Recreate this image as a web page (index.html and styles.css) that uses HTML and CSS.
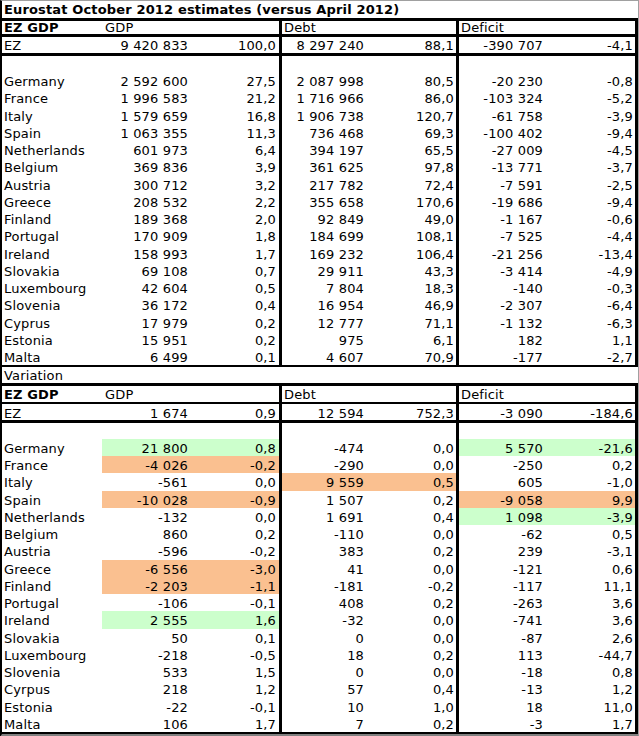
FILE: index.html
```html
<!DOCTYPE html>
<html>
<head>
<meta charset="utf-8">
<link rel="stylesheet" href="styles.css">
</head>
<body>
<div class="sheet">
  <div class="title">Eurostat October 2012 estimates (versus April 2012)</div>
  <div class="section first">
    <div class="hdr"><span class="b">EZ GDP</span><span class="grp">GDP</span><span class="grp">Debt</span><span class="grp last">Deficit</span></div>
    <div class="row ez"><span>EZ</span><span>9 420 833</span><span>100,0</span><span>8 297 240</span><span>88,1</span><span>-390 707</span><span>-4,1</span></div>
    <div class="row blank"><span></span><span></span><span></span><span></span><span></span><span></span><span></span></div>
    <div class="row"><span>Germany</span><span>2 592 600</span><span>27,5</span><span>2 087 998</span><span>80,5</span><span>-20 230</span><span>-0,8</span></div>
    <div class="row"><span>France</span><span>1 996 583</span><span>21,2</span><span>1 716 966</span><span>86,0</span><span>-103 324</span><span>-5,2</span></div>
    <div class="row"><span>Italy</span><span>1 579 659</span><span>16,8</span><span>1 906 738</span><span>120,7</span><span>-61 758</span><span>-3,9</span></div>
    <div class="row"><span>Spain</span><span>1 063 355</span><span>11,3</span><span>736 468</span><span>69,3</span><span>-100 402</span><span>-9,4</span></div>
    <div class="row"><span>Netherlands</span><span>601 973</span><span>6,4</span><span>394 197</span><span>65,5</span><span>-27 009</span><span>-4,5</span></div>
    <div class="row"><span>Belgium</span><span>369 836</span><span>3,9</span><span>361 625</span><span>97,8</span><span>-13 771</span><span>-3,7</span></div>
    <div class="row"><span>Austria</span><span>300 712</span><span>3,2</span><span>217 782</span><span>72,4</span><span>-7 591</span><span>-2,5</span></div>
    <div class="row"><span>Greece</span><span>208 532</span><span>2,2</span><span>355 658</span><span>170,6</span><span>-19 686</span><span>-9,4</span></div>
    <div class="row"><span>Finland</span><span>189 368</span><span>2,0</span><span>92 849</span><span>49,0</span><span>-1 167</span><span>-0,6</span></div>
    <div class="row"><span>Portugal</span><span>170 909</span><span>1,8</span><span>184 699</span><span>108,1</span><span>-7 525</span><span>-4,4</span></div>
    <div class="row"><span>Ireland</span><span>158 993</span><span>1,7</span><span>169 232</span><span>106,4</span><span>-21 256</span><span>-13,4</span></div>
    <div class="row"><span>Slovakia</span><span>69 108</span><span>0,7</span><span>29 911</span><span>43,3</span><span>-3 414</span><span>-4,9</span></div>
    <div class="row"><span>Luxembourg</span><span>42 604</span><span>0,5</span><span>7 804</span><span>18,3</span><span>-140</span><span>-0,3</span></div>
    <div class="row"><span>Slovenia</span><span>36 172</span><span>0,4</span><span>16 954</span><span>46,9</span><span>-2 307</span><span>-6,4</span></div>
    <div class="row"><span>Cyprus</span><span>17 979</span><span>0,2</span><span>12 777</span><span>71,1</span><span>-1 132</span><span>-6,3</span></div>
    <div class="row"><span>Estonia</span><span>15 951</span><span>0,2</span><span>975</span><span>6,1</span><span>182</span><span>1,1</span></div>
    <div class="row"><span>Malta</span><span>6 499</span><span>0,1</span><span>4 607</span><span>70,9</span><span>-177</span><span>-2,7</span></div>
  </div>
  <div class="variation">Variation</div>
  <div class="section second">
    <div class="hdr"><span class="b">EZ GDP</span><span class="grp">GDP</span><span class="grp">Debt</span><span class="grp last">Deficit</span></div>
    <div class="row ez"><span>EZ</span><span>1 674</span><span>0,9</span><span>12 594</span><span>752,3</span><span>-3 090</span><span>-184,6</span></div>
    <div class="row blank"><span></span><span></span><span></span><span></span><span></span><span></span><span></span></div>
    <div class="row"><span>Germany</span><span class="g">21 800</span><span class="g">0,8</span><span>-474</span><span>0,0</span><span class="g">5 570</span><span class="g">-21,6</span></div>
    <div class="row"><span>France</span><span class="o">-4 026</span><span class="o">-0,2</span><span>-290</span><span>0,0</span><span>-250</span><span>0,2</span></div>
    <div class="row"><span>Italy</span><span>-561</span><span>0,0</span><span class="o">9 559</span><span class="o">0,5</span><span>605</span><span>-1,0</span></div>
    <div class="row"><span>Spain</span><span class="o">-10 028</span><span class="o">-0,9</span><span>1 507</span><span>0,2</span><span class="o">-9 058</span><span class="o">9,9</span></div>
    <div class="row"><span>Netherlands</span><span>-132</span><span>0,0</span><span>1 691</span><span>0,4</span><span class="g">1 098</span><span class="g">-3,9</span></div>
    <div class="row"><span>Belgium</span><span>860</span><span>0,2</span><span>-110</span><span>0,0</span><span>-62</span><span>0,5</span></div>
    <div class="row"><span>Austria</span><span>-596</span><span>-0,2</span><span>383</span><span>0,2</span><span>239</span><span>-3,1</span></div>
    <div class="row"><span>Greece</span><span class="o">-6 556</span><span class="o">-3,0</span><span>41</span><span>0,0</span><span>-121</span><span>0,6</span></div>
    <div class="row"><span>Finland</span><span class="o">-2 203</span><span class="o">-1,1</span><span>-181</span><span>-0,2</span><span>-117</span><span>11,1</span></div>
    <div class="row"><span>Portugal</span><span>-106</span><span>-0,1</span><span>408</span><span>0,2</span><span>-263</span><span>3,6</span></div>
    <div class="row"><span>Ireland</span><span class="g">2 555</span><span class="g">1,6</span><span>-32</span><span>0,0</span><span>-741</span><span>3,6</span></div>
    <div class="row"><span>Slovakia</span><span>50</span><span>0,1</span><span>0</span><span>0,0</span><span>-87</span><span>2,6</span></div>
    <div class="row"><span>Luxembourg</span><span>-218</span><span>-0,5</span><span>18</span><span>0,2</span><span>113</span><span>-44,7</span></div>
    <div class="row"><span>Slovenia</span><span>533</span><span>1,5</span><span>0</span><span>0,0</span><span>-18</span><span>0,8</span></div>
    <div class="row"><span>Cyrpus</span><span>218</span><span>1,2</span><span>57</span><span>0,4</span><span>-13</span><span>1,2</span></div>
    <div class="row"><span>Estonia</span><span>-22</span><span>-0,1</span><span>10</span><span>1,0</span><span>18</span><span>11,0</span></div>
    <div class="row"><span>Malta</span><span>106</span><span>1,7</span><span>7</span><span>0,2</span><span>-3</span><span>1,7</span></div>
  </div>
</div>
</body>
</html>
```
FILE: styles.css
```css
html, body {
  margin: 0;
  padding: 0;
  background: #ffffff;
}

.sheet {
  width: 639px;
  box-sizing: border-box;
  border-top: 1px solid #a0a0a0;
  border-right: 1px solid #a0a0a0;
  border-left: 2px solid #000000;
  border-bottom: 3px solid #808080;
  font-family: "DejaVu Sans", Verdana, sans-serif;
  font-size: 13px;
  letter-spacing: 0.15px;
  color: #000000;
  font-variant-ligatures: none;
  overflow: hidden;
}

.title {
  height: 17px;
  line-height: 17px;
  padding-left: 2px;
  font-weight: bold;
  white-space: nowrap;
}

.variation {
  height: 15.5px;
  line-height: 17.5px;
  padding-left: 2px;
}

.section {
  border-top: 3px solid #000000;
  border-right: 3px solid #000000;
  border-bottom: 2px solid #000000;
}

.hdr,
.row {
  display: grid;
  grid-template-columns: 100px 88px 92px 84px 93px 86px 90px;
}

.hdr {
  height: 13px;
  line-height: 13px;
  border-bottom: 3px solid #000000;
}

.second .hdr {
  height: 16px;
  line-height: 17px;
  border-bottom: 2px solid #000000;
}

.hdr > span {
  box-sizing: border-box;
  padding-left: 2px;
  white-space: nowrap;
}

.hdr .b {
  font-weight: bold;
}

.hdr .grp {
  grid-column: span 2;
  border-right: 3px solid #000000;
}

.hdr .grp:nth-child(2) {
  padding-left: 3px;
}

.hdr .grp.last {
  border-right: none;
}

.row {
  height: 17.25px;
  line-height: 19px;
}

.row.ez {
  height: 16px;
  line-height: 17px;
  border-bottom: 3px solid #000000;
}

.second .row.ez {
  line-height: 19px;
}

.row.blank {
  height: 16px;
}

.row > span {
  box-sizing: border-box;
  height: 100%;
  overflow: hidden;
  text-align: right;
  padding-right: 2px;
  white-space: nowrap;
}

.row > span:first-child {
  text-align: left;
  padding-left: 2px;
  padding-right: 0;
}

.row > span:nth-child(3) {
  border-right: 3px solid #000000;
  padding-right: 3px;
}

.row > span:nth-child(5) {
  border-right: 3px solid #000000;
  padding-right: 2px;
}

.row > span.g {
  background: #ccffcc;
}

.row > span.o {
  background: #fac090;
}
```
